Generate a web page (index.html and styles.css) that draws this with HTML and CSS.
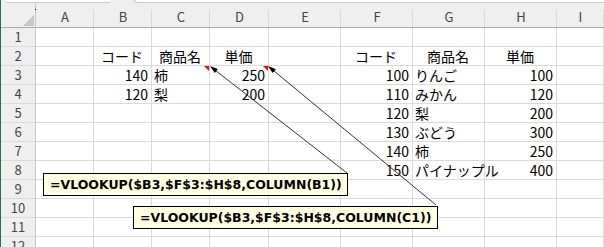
FILE: index.html
```html
<!DOCTYPE html>
<html lang="ja">
<head>
<meta charset="utf-8">
<title>VLOOKUP COLUMN</title>
<link rel="stylesheet" href="styles.css">
</head>
<body>
<div class="app">
  <div class="topbar"><div class="namebox"></div><div class="formulabar"></div></div>
  <div class="sheet">
    <div class="corner"><span class="dot"></span></div>
    <div class="ch">A</div><div class="ch">B</div><div class="ch">C</div><div class="ch">D</div><div class="ch">E</div><div class="ch">F</div><div class="ch">G</div><div class="ch">H</div><div class="ch">I</div>

    <div class="rh">1</div><div class="c"></div><div class="c"></div><div class="c"></div><div class="c"></div><div class="c"></div><div class="c"></div><div class="c"></div><div class="c"></div><div class="c"></div>

    <div class="rh">2</div><div class="c"></div><div class="c ctr">コード</div><div class="c ctr">商品名</div><div class="c ctr">単価</div><div class="c"></div><div class="c ctr">コード</div><div class="c ctr">商品名</div><div class="c ctr">単価</div><div class="c"></div>

    <div class="rh">3</div><div class="c"></div><div class="c num">140</div><div class="c note">柿</div><div class="c num note">250</div><div class="c"></div><div class="c num">100</div><div class="c">りんご</div><div class="c num">100</div><div class="c"></div>

    <div class="rh">4</div><div class="c"></div><div class="c num">120</div><div class="c">梨</div><div class="c num">200</div><div class="c"></div><div class="c num">110</div><div class="c">みかん</div><div class="c num">120</div><div class="c"></div>

    <div class="rh">5</div><div class="c"></div><div class="c"></div><div class="c"></div><div class="c"></div><div class="c"></div><div class="c num">120</div><div class="c">梨</div><div class="c num">200</div><div class="c"></div>

    <div class="rh">6</div><div class="c"></div><div class="c"></div><div class="c"></div><div class="c"></div><div class="c"></div><div class="c num">130</div><div class="c">ぶどう</div><div class="c num">300</div><div class="c"></div>

    <div class="rh">7</div><div class="c"></div><div class="c"></div><div class="c"></div><div class="c"></div><div class="c"></div><div class="c num">140</div><div class="c">柿</div><div class="c num">250</div><div class="c"></div>

    <div class="rh">8</div><div class="c"></div><div class="c"></div><div class="c"></div><div class="c"></div><div class="c"></div><div class="c num">150</div><div class="c">パイナップル</div><div class="c num">400</div><div class="c"></div>

    <div class="rh">9</div><div class="c"></div><div class="c"></div><div class="c"></div><div class="c"></div><div class="c"></div><div class="c"></div><div class="c"></div><div class="c"></div><div class="c"></div>

    <div class="rh">10</div><div class="c"></div><div class="c"></div><div class="c"></div><div class="c"></div><div class="c"></div><div class="c"></div><div class="c"></div><div class="c"></div><div class="c"></div>

    <div class="rh">11</div><div class="c"></div><div class="c"></div><div class="c"></div><div class="c"></div><div class="c"></div><div class="c"></div><div class="c"></div><div class="c"></div><div class="c"></div>

    <div class="rh">12</div><div class="c"></div><div class="c"></div><div class="c"></div><div class="c"></div><div class="c"></div><div class="c"></div><div class="c"></div><div class="c"></div><div class="c"></div>
  </div>

  <svg class="arrows" width="604" height="247" viewBox="0 0 604 247" aria-hidden="true">
    <line x1="213" y1="68.5" x2="347" y2="173" stroke="#333" stroke-width="1"/>
    <polygon points="210,66 214.8,72.9 217.8,68.9" fill="#000"/>
    <line x1="271" y1="68.5" x2="436" y2="205" stroke="#333" stroke-width="1"/>
    <polygon points="268,66 272.6,73 275.8,69.2" fill="#000"/>
  </svg>

  <div class="comment c-one">=VLOOKUP($B3,$F$3:$H$8,COLUMN(B1))</div>
  <div class="comment c-two">=VLOOKUP($B3,$F$3:$H$8,COLUMN(C1))</div>
</div>
</body>
</html>
```

FILE: styles.css
```css
html, body {
  margin: 0;
  padding: 0;
  background: #ffffff;
}

.app {
  position: relative;
  width: 604px;
  height: 247px;
  overflow: hidden;
  box-sizing: border-box;
  border-left: 1px solid #217346;
  background: #ffffff;
}

.topbar {
  display: flex;
  height: 3px;
  background: #efefef;
}

.namebox {
  margin-left: 4px;
  width: 106px;
  height: 2px;
  background: #ffffff;
  border-bottom: 1px solid #c6c6c6;
  border-radius: 0 0 3px 3px;
}

.formulabar {
  margin-left: 23px;
  flex: 1;
  height: 2px;
  background: #ffffff;
  border-bottom: 1px solid #c6c6c6;
  border-left: 1px solid #c6c6c6;
  border-radius: 0 0 0 3px;
}

.sheet {
  display: grid;
  grid-template-columns: 35px 58px 58px 58px 59px 72px 72px 72px 72px 1fr;
  grid-template-rows: 25px;
  grid-auto-rows: 19px;
  font-family: "Noto Sans CJK JP", "Noto Sans", sans-serif;
}

.corner {
  position: relative;
  background: #efefef;
  border-right: 1px solid #c8c8c8;
  border-bottom: 1px solid #ababab;
  box-sizing: border-box;
}

.corner::after {
  content: "";
  position: absolute;
  right: 1px;
  bottom: 1px;
  width: 0;
  height: 0;
  border-left: 11px solid transparent;
  border-bottom: 11px solid #c6c6c6;
}

.dot {
  position: absolute;
  right: -1px;
  top: 6px;
  width: 1px;
  height: 1px;
  background: #000;
}

.ch {
  position: relative;
  background: #efefef;
  border-bottom: 1px solid #ababab;
  box-sizing: border-box;
  display: flex;
  align-items: flex-end;
  justify-content: center;
  padding-bottom: 2px;
  font-size: 13px;
  line-height: 16px;
  color: #444444;
}

.ch::after {
  content: "";
  position: absolute;
  right: 0;
  top: 7px;
  bottom: 0;
  width: 1px;
  background: #d8d8d8;
}

.rh {
  background: #efefef;
  border-right: 1px solid #c8c8c8;
  border-bottom: 1px solid #dadada;
  box-sizing: border-box;
  text-align: center;
  font-size: 13px;
  line-height: 18px;
  color: #444444;
}

.c {
  position: relative;
  box-sizing: border-box;
  border-right: 1px solid #dadada;
  border-bottom: 1px solid #dadada;
  padding: 0 3px 0 2px;
  font-size: 14px;
  line-height: 18px;
  color: #000000;
  white-space: nowrap;
}

.num {
  text-align: right;
}

.ctr {
  text-align: center;
}

.note::after {
  content: "";
  position: absolute;
  top: 0;
  right: 0;
  width: 0;
  height: 0;
  border-top: 5px solid #ff0000;
  border-left: 5px solid transparent;
}

.arrows {
  position: absolute;
  left: -1px;
  top: 0;
  pointer-events: none;
}

.comment {
  position: absolute;
  box-sizing: border-box;
  width: 305px;
  height: 23px;
  padding-left: 6px;
  border: 1px solid #000000;
  background: #ffffe1;
  font-family: "DejaVu Sans", Verdana, sans-serif;
  font-weight: bold;
  font-size: 12.5px;
  line-height: 21px;
  color: #000000;
  white-space: nowrap;
}

.c-one {
  left: 42px;
  top: 173px;
}

.c-two {
  left: 132px;
  top: 206px;
}
```
